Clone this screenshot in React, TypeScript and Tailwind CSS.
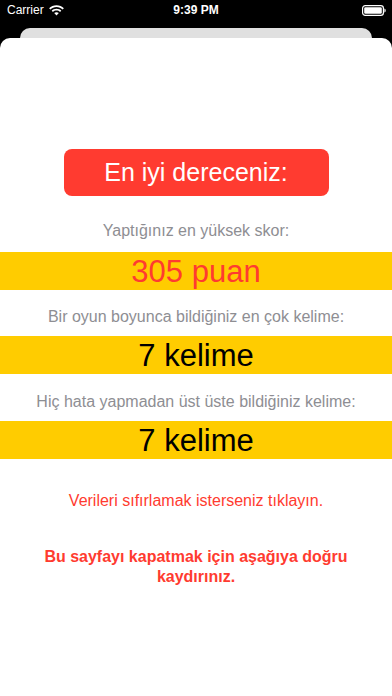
import React from "react";

function Wifi() {
  return (
    <svg width="15" height="11" viewBox="0 0 15 11" fill="white">
      <path d="M7.5 0.3C4.6 0.3 2 1.4 0.1 3.3l1.3 1.3C3 3 5.1 2.1 7.5 2.1s4.5 0.9 6.1 2.5l1.3-1.3C13 1.4 10.4 0.3 7.5 0.3z" />
      <path d="M7.5 3.8c-1.9 0-3.6 0.7-4.8 1.9L4 7c0.9-0.9 2.1-1.4 3.5-1.4S10.1 6.1 11 7l1.3-1.3C11.1 4.5 9.4 3.8 7.5 3.8z" />
      <path d="M7.5 7.2c-0.9 0-1.7 0.3-2.3 0.9l2.3 2.4 2.3-2.4C9.2 7.5 8.4 7.2 7.5 7.2z" />
    </svg>
  );
}

function Battery() {
  return (
    <svg width="24" height="11" viewBox="0 0 24 11">
      <rect x="0.6" y="0.6" width="20.8" height="9.8" rx="2.6" fill="none" stroke="white" strokeWidth="1.2" />
      <rect x="2.2" y="2.2" width="17.6" height="6.6" rx="1.3" fill="white" />
      <path d="M22.4 3.6c0.8 0.2 1.3 0.9 1.3 1.9s-0.5 1.7-1.3 1.9z" fill="white" />
    </svg>
  );
}

function Label({ children, mt }: { children: React.ReactNode; mt: string }) {
  return (
    <div className={`${mt} h-[20px] leading-[20px] text-[16px] text-[#8e8e93] text-center whitespace-nowrap`}>
      {children}
    </div>
  );
}

export default function App() {
  return (
    <div className="w-[392px] h-[696px] bg-black flex flex-col overflow-hidden font-['Liberation_Sans',Arial,sans-serif]">
      <div className="h-[20px] grid grid-cols-3 items-center text-white text-[12px]">
        <div className="flex items-center gap-[5px] pl-[7px]">
          <span>Carrier</span>
          <Wifi />
        </div>
        <div className="text-center font-bold">9:39 PM</div>
        <div className="flex justify-end pr-[6px]">
          <Battery />
        </div>
      </div>
      <div className="mt-[8px] mx-[20px] h-[10px] bg-[#e0e0e0] rounded-t-[10px]" />
      <div className="flex-1 bg-white rounded-t-[10px] flex flex-col items-center">
        <div className="mt-[111px] w-[265px] h-[47px] rounded-[8px] bg-[#ff3b30] text-white text-[25px] flex items-center justify-center">
          En iyi dereceniz:
        </div>

        <Label mt="mt-[25px]">Yaptığınız en yüksek skor:</Label>
        <div className="mt-[11px] w-full h-[38px] bg-[#ffcc00] flex items-center justify-center text-[31px] leading-none text-[#ff3b30]">
          305 puan
        </div>

        <Label mt="mt-[17px]">Bir oyun boyunca bildiğiniz en çok kelime:</Label>
        <div className="mt-[9px] w-full h-[38px] bg-[#ffcc00] flex items-center justify-center text-[31px] leading-none text-black">
          7 kelime
        </div>

        <Label mt="mt-[18px]">Hiç hata yapmadan üst üste bildiğiniz kelime:</Label>
        <div className="mt-[9px] w-full h-[38px] bg-[#ffcc00] flex items-center justify-center text-[31px] leading-none text-black">
          7 kelime
        </div>

        <div className="mt-[32px] h-[20px] leading-[20px] text-[16px] text-[#ff3b30] text-center">
          Verileri sıfırlamak isterseniz tıklayın.
        </div>

        <div className="mt-[36px] w-[320px] leading-[20px] text-[16px] font-bold text-[#ff3b30] text-center">
          Bu sayfayı kapatmak için aşağıya doğru kaydırınız.
        </div>
      </div>
    </div>
  );
}
